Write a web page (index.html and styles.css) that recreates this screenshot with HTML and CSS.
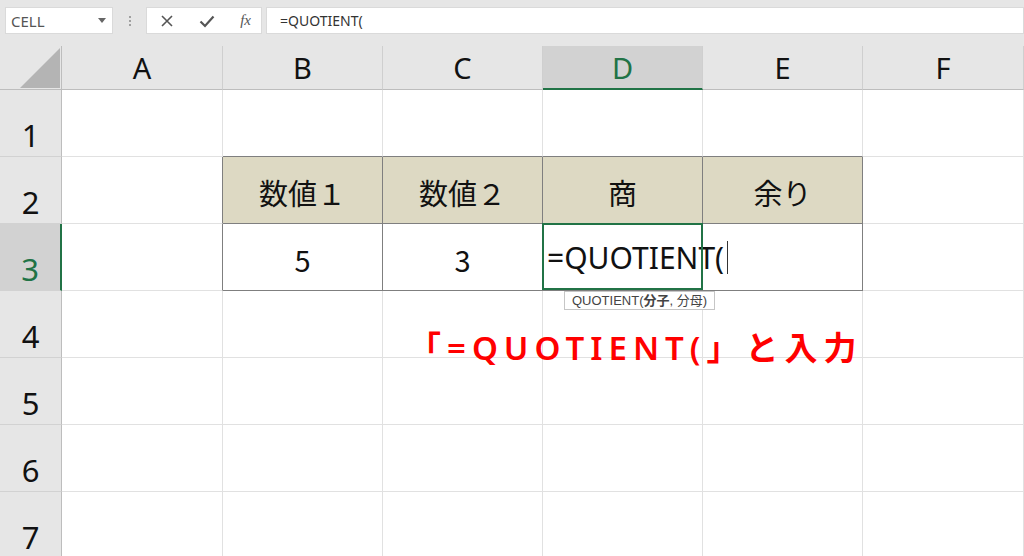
FILE: index.html
```html
<!DOCTYPE html>
<html lang="ja">
<head>
  <meta charset="UTF-8" />
  <title>QUOTIENT</title>
  <link rel="stylesheet" href="styles.css">
</head>
<body>

<!-- 数式バー -->
<div class="toolbar">
  <div class="namebox">
    <span>CELL</span>
    <svg class="caret-down" width="8" height="5" viewBox="0 0 8 5"><path d="M0 0h8L4 5z" fill="#666"/></svg>
  </div>
  <div class="dots"><i></i><i></i><i></i></div>
  <div class="btns">
    <svg width="14" height="14" viewBox="0 0 14 14"><path d="M2 2l10 10M12 2L2 12" stroke="#555" stroke-width="1.6"/></svg>
    <svg width="16" height="14" viewBox="0 0 16 14"><path d="M1.5 7.5l4.5 4.5L14.5 2.5" stroke="#555" stroke-width="2.2" fill="none"/></svg>
    <span class="fx">fx</span>
  </div>
  <div class="formula">=QUOTIENT(</div>
</div>

<!-- シート -->
<div class="sheet">
  <div class="corner">
    <svg width="62" height="44" viewBox="0 0 62 44"><path d="M20 42H60V2z" fill="#b4b4b4"/></svg>
  </div>
  <div class="colh">A</div>
  <div class="colh">B</div>
  <div class="colh">C</div>
  <div class="colh sel">D</div>
  <div class="colh">E</div>
  <div class="colh">F</div>

  <div class="rowh">1</div>
  <div class="cell"></div>
  <div class="cell tt"></div>
  <div class="cell tt"></div>
  <div class="cell tt"></div>
  <div class="cell tt"></div>
  <div class="cell"></div>

  <div class="rowh">2</div>
  <div class="cell tl"></div>
  <div class="cell t th">数値１</div>
  <div class="cell t th">数値２</div>
  <div class="cell t th">商</div>
  <div class="cell t th">余り</div>
  <div class="cell"></div>

  <div class="rowh sel">3</div>
  <div class="cell tl"></div>
  <div class="cell t">5</div>
  <div class="cell t">3</div>
  <div class="cell t edit">=QUOTIENT(<span class="cursor"></span>
    <div class="tip">QUOTIENT(<b>分子</b>, 分母)</div>
  </div>
  <div class="cell"></div>

  <div class="rowh">4</div>
  <div class="cell"></div><div class="cell"></div><div class="cell"></div><div class="cell"></div><div class="cell"></div><div class="cell"></div>
  <div class="rowh">5</div>
  <div class="cell"></div><div class="cell"></div><div class="cell"></div><div class="cell"></div><div class="cell"></div><div class="cell"></div>
  <div class="rowh">6</div>
  <div class="cell"></div><div class="cell"></div><div class="cell"></div><div class="cell"></div><div class="cell"></div><div class="cell"></div>
  <div class="rowh">7</div>
  <div class="cell"></div><div class="cell"></div><div class="cell"></div><div class="cell"></div><div class="cell"></div><div class="cell"></div>

  <div class="note">「=QUOTIENT(」と入力</div>
</div>

</body>
</html>
```

FILE: styles.css
```css
body {
  margin: 0;
  width: 1024px;
  height: 556px;
  overflow: hidden;
  background: #fff;
  font-family: "Noto Sans", "Noto Sans CJK JP", sans-serif;
}

.toolbar {
  height: 46px;
  background: #e6e6e6;
  display: flex;
  align-items: flex-start;
  padding-top: 7px;
  box-sizing: border-box;
}

.namebox, .btns, .formula {
  height: 27px;
  background: #fff;
  border: 1px solid #dadada;
  box-sizing: border-box;
  display: flex;
  align-items: center;
}

.namebox {
  margin-left: 5px;
  width: 108px;
  padding: 0 6px 0 5px;
  justify-content: space-between;
  font-size: 15px;
  color: #555;
}

.dots {
  width: 33px;
  height: 27px;
  display: flex;
  flex-direction: column;
  align-items: center;
  justify-content: center;
  gap: 2px;
}

.dots i {
  width: 2px;
  height: 2px;
  background: #a0a0a0;
}

.btns {
  width: 116px;
  padding: 0 10px 0 13px;
  justify-content: space-between;
}

.fx {
  font-family: "Liberation Serif", serif;
  font-style: italic;
  font-size: 15px;
  color: #555;
}

.formula {
  flex: 1;
  margin-left: 4px;
  padding-left: 13px;
  font-size: 14px;
  color: #333;
}

.sheet {
  position: relative;
  display: grid;
  grid-template-columns: 62px 161px 160px 160px 160px 160px 161px;
  grid-template-rows: 44px repeat(7, 67px);
}

.corner {
  background: #e6e6e6;
  border-right: 1px solid #bdbdbd;
  border-bottom: 1px solid #bdbdbd;
  box-sizing: border-box;
}

.corner svg {
  display: block;
}

.colh {
  background: #e6e6e6;
  border-right: 1px solid #cfcfcf;
  border-bottom: 1px solid #bdbdbd;
  box-sizing: border-box;
  display: flex;
  align-items: center;
  justify-content: center;
  font-size: 29px;
  color: #111;
}

.rowh {
  background: #e6e6e6;
  border-right: 1px solid #bdbdbd;
  border-bottom: 1px solid #d2d2d2;
  box-sizing: border-box;
  display: flex;
  align-items: flex-end;
  justify-content: center;
  padding-bottom: 5px;
  font-size: 31px;
  line-height: 1;
  color: #111;
}

.colh.sel {
  background: #d2d2d2;
  color: #217346;
  border-bottom: 2px solid #217346;
}

.rowh.sel {
  background: #d2d2d2;
  color: #217346;
  border-right: 2px solid #217346;
}

.cell {
  border-right: 1px solid #e1e1e1;
  border-bottom: 1px solid #e1e1e1;
  box-sizing: border-box;
  display: flex;
  align-items: center;
  justify-content: center;
  font-family: "Noto Sans CJK JP", sans-serif;
  font-size: 29px;
  color: #111;
}

.cell.tt {
  border-bottom-color: #7f7f7f;
}

.cell.tl {
  border-right-color: #7f7f7f;
}

.cell.t {
  border-right-color: #7f7f7f;
  border-bottom-color: #7f7f7f;
  padding-top: 4px;
}

.cell.th {
  background: #ddd9c3;
}

.cell.edit {
  position: relative;
  grid-column: span 2;
  justify-content: flex-start;
  padding-left: 4px;
  padding-top: 0;
  font-family: "Noto Sans", sans-serif;
  font-size: 30px;
}

.cell.edit::before {
  content: "";
  position: absolute;
  left: -1px;
  top: -1px;
  width: 161px;
  height: 67px;
  border: 2px solid #217346;
  box-sizing: border-box;
}

.cursor {
  display: inline-block;
  width: 1px;
  height: 33px;
  background: #333;
  margin-left: 3px;
}

.tip {
  position: absolute;
  left: 21px;
  top: 67px;
  height: 19px;
  padding: 0 7px 0 7px;
  background: #fff;
  border: 1px solid #c6c6c6;
  box-sizing: border-box;
  font-family: "Liberation Sans", "Noto Sans CJK JP", sans-serif;
  font-size: 13px;
  line-height: 17px;
  color: #444;
  white-space: nowrap;
}

.note {
  position: absolute;
  left: 408px;
  top: 276px;
  font-family: "Noto Sans", "Noto Sans CJK JP", sans-serif;
  font-weight: 600;
  font-size: 33px;
  letter-spacing: 6px;
  color: #ff0000;
  white-space: nowrap;
}
```
